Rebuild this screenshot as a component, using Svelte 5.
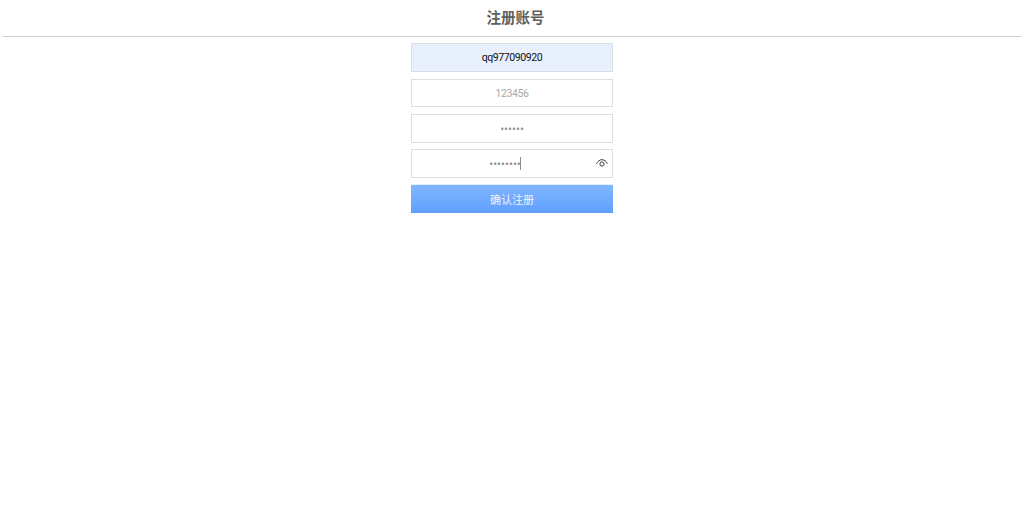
<script>
    let username = 'qq977090920';
    let showPassword = false;
</script>

<main>
    <header class="title">注册账号</header>
    <form class="register" on:submit|preventDefault>
        <input class="field filled" type="text" bind:value={username} />
        <input class="field" type="text" value="123456" />
        <input class="field" type="password" value="123456" />
        <div class="confirm">
            <input class="field with-eye" type={showPassword ? 'text' : 'password'} value="12345678" />
            <span class="caret"></span>
            <button class="eye" type="button" aria-label="show password" on:click={() => (showPassword = !showPassword)}>
                <svg width="12" height="10" viewBox="0 0 12 10" fill="none" stroke="#3a3a3a" stroke-width="1">
                    <path d="M.6 5.6C2 3 3.8 1.7 6 1.7s4 1.3 5.4 3.9" />
                    <circle cx="6" cy="6" r="2.1" />
                </svg>
            </button>
        </div>
        <button class="submit" type="submit">确认注册</button>
    </form>
</main>

<style>
    :global(body) {
        background: #fff;
    }

    main {
        font-family: Roboto, "Noto Sans CJK SC", sans-serif;
    }

    .title {
        height: 36px;
        margin: 0 3px;
        padding-left: 7px;
        border-bottom: 1px solid #cfcfcf;
        font-family: "Noto Sans CJK SC", sans-serif;
        font-size: 14.5px;
        font-weight: 700;
        line-height: 33px;
        text-align: center;
        color: #5f5f5f;
    }

    .register {
        display: flex;
        flex-direction: column;
        gap: 6.7px;
        width: 202px;
        margin: 6.4px auto 0;
    }

    .field {
        display: block;
        box-sizing: border-box;
        width: 100%;
        height: 28.6px;
        padding: 1px 4px 0;
        border: 1px solid #dedede;
        border-radius: 0;
        outline: none;
        background: #fff;
        font-family: Roboto, sans-serif;
        font-size: 10.5px;
        letter-spacing: -0.4px;
        text-align: center;
        color: #a8a8a8;
    }

    .field[type="password"] {
        font-family: "Open Sans", sans-serif;
        letter-spacing: 0;
        color: #8f8f8f;
    }

    .with-eye {
        padding-right: 18px;
    }

    .filled {
        padding-top: 0;
        border-color: #d8dee8;
        background: #e8f0fe;
        color: #111;
    }

    .confirm {
        position: relative;
    }

    .caret {
        position: absolute;
        top: 8px;
        left: 109px;
        width: 1px;
        height: 13px;
        background: #8a8a8a;
    }

    .eye {
        position: absolute;
        top: 9px;
        right: 5px;
        display: flex;
        padding: 0;
        border: none;
        background: none;
        cursor: pointer;
    }

    .submit {
        height: 29.6px;
        margin-top: -1px;
        padding: 0;
        border: none;
        border-top: 1px solid #e4effd;
        background: linear-gradient(#80b6ff, #5f9fff);
        font-family: "Noto Sans CJK SC", sans-serif;
        font-size: 11px;
        color: #f4f4f4;
        cursor: pointer;
    }
</style>
